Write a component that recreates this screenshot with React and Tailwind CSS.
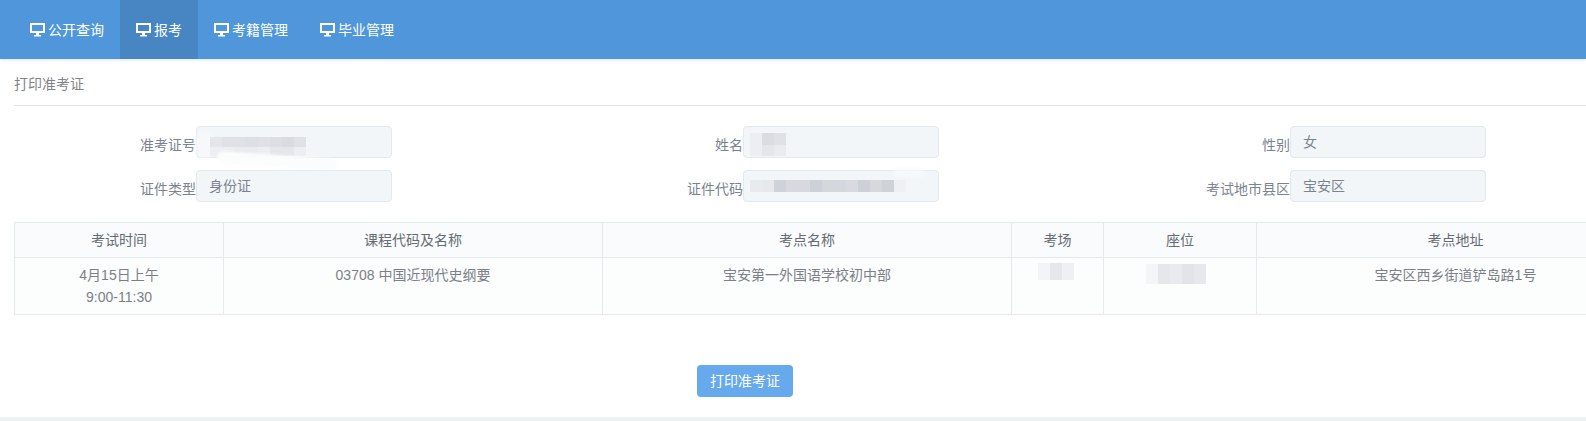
import React from 'react';

const fontStack = '[font-family:"Liberation_Sans","Noto_Sans_CJK_SC",sans-serif]';

const navItems = ['公开查询', '报考', '考籍管理', '毕业管理'];

const MonitorIcon = () => (
  <svg width="15" height="14" viewBox="0 0 15 14" className="shrink-0" fill="#fff">
    <path fillRule="evenodd" d="M0 0h15v10H9v2h2v1.5H4V12h2v-2H0zM2 2v6h11V2z" />
  </svg>
);

// the blurred-out values in the screenshot: a row of 12px blocks over the field
const Mosaic = ({ rows, className }) => (
  <div className={`absolute flex flex-col ${className}`}>
    {rows.map((row, i) => (
      <div key={i} className="flex flex-1">
        {row.map((c, j) => (
          <div key={j} className="w-3" style={{ backgroundColor: c }} />
        ))}
      </div>
    ))}
  </div>
);

const Field = ({ label, value, children }) => (
  <div className="flex w-[547px] shrink-0">
    <label className="w-[182px] pt-[7px] text-right leading-[24px] text-[#7b8390] whitespace-nowrap">{label}</label>
    <div className="relative h-8 w-[196px] rounded border border-[#e4e9ee] bg-[#f3f6f9] pl-3 leading-[31px] text-[#7b8390]">
      {value}
      {children}
    </div>
  </div>
);

const columns = [
  { title: '考试时间', width: 'w-[209px]' },
  { title: '课程代码及名称', width: 'w-[379px]' },
  { title: '考点名称', width: 'w-[409px]' },
  { title: '考场', width: 'w-[92px]' },
  { title: '座位', width: 'w-[153px]' },
  { title: '考点地址', width: 'w-[398px]' },
];

const App = () => {
  return (
    <div className={`h-[421px] w-full overflow-hidden bg-white text-sm ${fontStack}`}>
      <nav className="flex h-[59px] bg-[#4f97da] pl-[14px] shadow-[0_1px_3px_rgba(0,0,0,0.12)]">
        {navItems.map((item, i) => (
          <a
            key={item}
            className={`flex items-center gap-[3px] px-4 text-white ${i === 1 ? 'bg-[#4786c2]' : ''}`}
          >
            <MonitorIcon />
            <span>{item}</span>
          </a>
        ))}
      </nav>

      <div className="h-[358px] w-[1700px] pl-[14px]">
        <h2 className="h-[47px] border-b border-[#dfe1e4] pt-[13px] text-sm leading-[24px] font-normal text-[#80848a]">
          打印准考证
        </h2>

        <div className="mt-[20px] flex">
          <Field label="准考证号">
            <div className="absolute top-[5px] -left-[2px] h-[26px] w-5 rounded-full bg-[#f7f8f9] blur-[2px]" />
            <Mosaic
              className="top-[10px] left-[13px] h-[19px]"
              rows={[
                ['#e4e6ea', '#dfe1e6', '#dfe1e6', '#dcdfe4', '#dfe1e6', '#dcdee4', '#d8dbe2', '#dfe1e6'],
                ['#eceef1', '#eceef1', '#e9ebee', '#e9ebee', '#eceef1', '#e4e6ea', '#e4e6ea', '#eceef1'],
              ]}
            />
            <div className="absolute top-[28px] left-[20px] h-3 w-[120px] rotate-[4deg] rounded-full bg-[#fbfcfc] blur-[1px]" />
          </Field>
          <Field label="姓名">
            <Mosaic
              className="top-[6px] left-[6px] h-[23px]"
              rows={[
                ['#eceef1', '#d9dce0', '#dfe1e5'],
                ['#eceef1', '#e4e6e9', '#e9ebee'],
              ]}
            />
          </Field>
          <Field label="性别" value="女" />
        </div>

        <div className="mt-3 flex">
          <Field label="证件类型" value="身份证" />
          <Field label="证件代码">
            <div className="absolute -top-[2px] left-[150px] h-2 w-[30px] rounded-full bg-[#f7f8f9] blur-[2px]" />
            <Mosaic
              className="top-[9px] left-[6px] h-3"
              rows={[
                ['#e8eaed', '#e6e8ec', '#cfd2d8', '#d7d9de', '#d7d9de', '#cdd0d7', '#d4d7dc', '#d4d7dd', '#d8dae0', '#cdd0d7', '#d6d8dd', '#cfd2d7', '#eef0f3'],
              ]}
            />
          </Field>
          <Field label="考试地市县区" value="宝安区" />
        </div>

        <table className="mt-5 table-fixed border-collapse border border-[#e4e9ec] text-center">
          <thead>
            <tr className="h-[35px] bg-[#f9fbfc] text-[#666b73]">
              {columns.map((col) => (
                <th key={col.title} className={`${col.width} border border-[#e4e9ec] font-normal`}>
                  {col.title}
                </th>
              ))}
            </tr>
          </thead>
          <tbody>
            <tr className="h-[57px] bg-[#fcfdfd] align-top leading-[22px] text-[#7b8087]">
              <td className="border border-[#e4e9ec] pt-[6px]">
                4月15日上午
                <br />
                9:00-11:30
              </td>
              <td className="border border-[#e4e9ec] pt-[6px]">03708 中国近现代史纲要</td>
              <td className="border border-[#e4e9ec] pt-[6px]">宝安第一外国语学校初中部</td>
              <td className="relative border border-[#e4e9ec] pt-[6px]">
                <Mosaic
                  className="top-[5px] left-[26px] h-[17px]"
                  rows={[['#f3f4f5', '#e6e7ea', '#eff0f2']]}
                />
              </td>
              <td className="relative border border-[#e4e9ec] pt-[6px]">
                <Mosaic
                  className="top-[6px] left-[42px] h-[20px]"
                  rows={[['#f4f5f6', '#e6e7ea', '#e9eaed', '#e3e4e8', '#e6e8eb']]}
                />
              </td>
              <td className="border border-[#e4e9ec] pt-[6px]">宝安区西乡街道铲岛路1号</td>
            </tr>
          </tbody>
        </table>

        <div className="mt-[50px] pl-[683px]">
          <button className="h-8 w-24 rounded bg-[#66a9ec] text-sm text-white">打印准考证</button>
        </div>
      </div>
      <div className="h-1 bg-[#eef1f2]" />
    </div>
  );
};

export default App;
